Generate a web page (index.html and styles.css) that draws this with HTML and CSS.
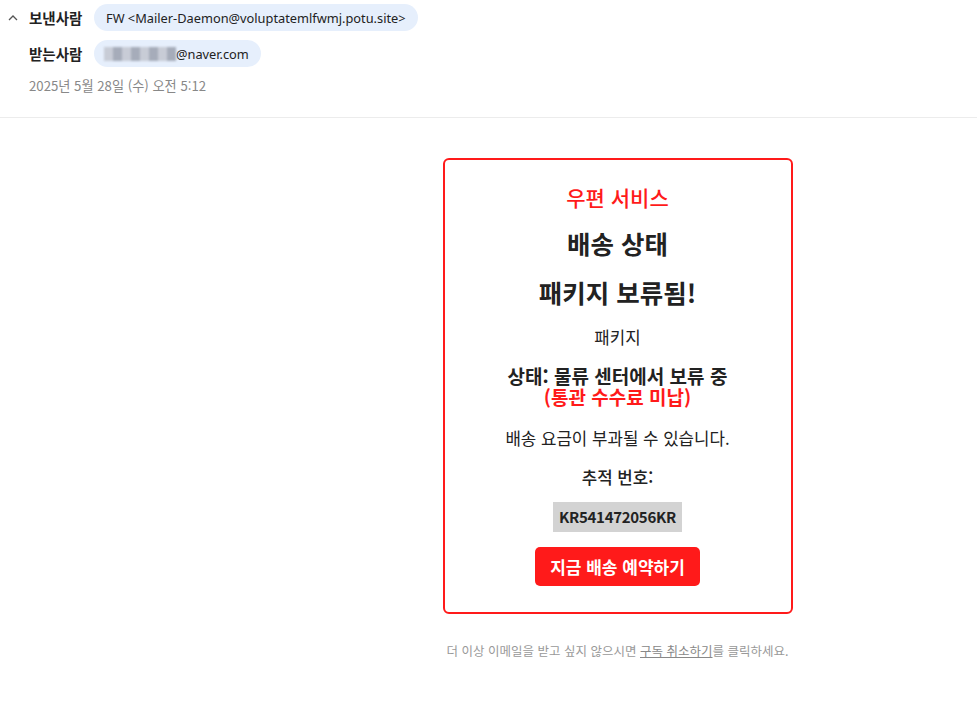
FILE: index.html
```html
<!DOCTYPE html>
<html lang="ko">
<head>
    <meta charset="UTF-8">
    <title>배송 상태</title>
    <link rel="stylesheet" href="styles.css">
</head>
<body>
    <div class="mail-head">
        <div class="row">
            <svg class="chevron" width="12" height="12" viewBox="0 0 12 12">
                <path d="M2 8 L6 4 L10 8" fill="none" stroke="#555" stroke-width="1.3"/>
            </svg>
            <span class="label">보낸사람</span>
            <span class="pill">FW &lt;Mailer-Daemon@voluptatemlfwmj.potu.site&gt;</span>
        </div>
        <div class="row">
            <span class="chevron-space"></span>
            <span class="label">받는사람</span>
            <span class="pill">
                <span class="blur">
                    <i></i><i class="d"></i><i></i><i class="d"></i><i></i><i class="d"></i><i></i><i class="d"></i>
                </span>@naver.com
            </span>
        </div>
        <div class="date">2025년 5월 28일 (수) 오전 5:12</div>
    </div>

    <div class="mail-body">
        <div class="card">
            <div class="brand">우편 서비스</div>
            <h2>배송 상태</h2>
            <h2 class="second">패키지 보류됨!</h2>
            <p class="pkg">패키지</p>
            <p class="status">상태: 물류 센터에서 보류 중<br><span class="red">(통관 수수료 미납)</span></p>
            <p class="fee">배송 요금이 부과될 수 있습니다.</p>
            <p class="track-label">추적 번호:</p>
            <div class="track">KR541472056KR</div>
            <a class="btn" href="#">지금 배송 예약하기</a>
        </div>
        <div class="footer">더 이상 이메일을 받고 싶지 않으시면 <a href="#">구독 취소하기</a>를 클릭하세요.</div>
    </div>
</body>
</html>
```

FILE: styles.css
```css
body {
    margin: 0;
    font-family: "Noto Sans", "Noto Sans CJK KR", sans-serif;
    color: #222;
    background: #fff;
}

.mail-head {
    padding: 4px 0 0 0;
    border-bottom: 1px solid #ececec;
    height: 118px;
    box-sizing: border-box;
}

.row {
    display: flex;
    align-items: center;
    height: 27px;
    margin-bottom: 9px;
}

.chevron {
    width: 12px;
    margin-left: 7px;
    margin-right: 10px;
}

.chevron-space {
    width: 12px;
    margin-left: 7px;
    margin-right: 10px;
}

.label {
    font-family: "Noto Sans CJK KR", sans-serif;
    font-weight: 700;
    font-size: 14.5px;
    width: 65px;
}

.pill {
    display: flex;
    align-items: center;
    height: 27px;
    padding: 0 12px;
    border-radius: 14px;
    background: #e6effc;
    font-size: 12.8px;
}

.blur {
    display: flex;
    filter: blur(1.2px);
    margin-left: -2px;
}

.blur i {
    width: 9px;
    height: 14px;
    background: #c8ccd6;
}

.blur i.d {
    background: #a6acba;
}

.date {
    margin: 8px 0 0 29px;
    font-family: "Noto Sans CJK KR", sans-serif;
    font-size: 13.2px;
    color: #888;
}

.mail-body {
    padding: 40px 0 0 258px;
    display: flex;
    flex-direction: column;
    align-items: center;
}

.card {
    width: 350px;
    box-sizing: border-box;
    border: 2px solid #ff1a1a;
    border-radius: 6px;
    padding: 22px 10px 26px;
    text-align: center;
    font-family: "Noto Sans CJK KR", sans-serif;
}

.brand {
    color: #ff1a1a;
    font-size: 21px;
    font-weight: 500;
    line-height: 30px;
}

h2 {
    font-size: 25.5px;
    font-weight: 700;
    margin: 14px 0 0;
    line-height: 34px;
}

h2.second {
    margin-top: 15px;
}

p {
    font-size: 16.8px;
    margin: 0;
    line-height: 22px;
}

.pkg {
    margin-top: 17px;
}

.status {
    font-weight: 700;
    font-size: 19px;
    line-height: 21px;
    margin-top: 17px;
}

.red {
    color: #ff1a1a;
}

.fee {
    margin-top: 20px;
}

.track-label {
    font-weight: 500;
    margin-top: 17px;
}

.track {
    display: inline-block;
    margin-top: 14px;
    padding: 4px 6px;
    background: #d3d3d3;
    font-weight: 700;
    font-size: 15px;
    letter-spacing: -0.3px;
    line-height: 22px;
}

.btn {
    display: table;
    margin: 15px auto 0;
    padding: 8px 15px;
    background: #ff1a1a;
    border-radius: 5px;
    color: #fff;
    font-weight: 700;
    font-size: 17px;
    line-height: 23px;
    text-decoration: none;
}

.footer {
    margin-top: 27px;
    font-family: "Noto Sans CJK KR", sans-serif;
    font-size: 12.5px;
    color: #999;
}

.footer a {
    color: #888;
}
```
